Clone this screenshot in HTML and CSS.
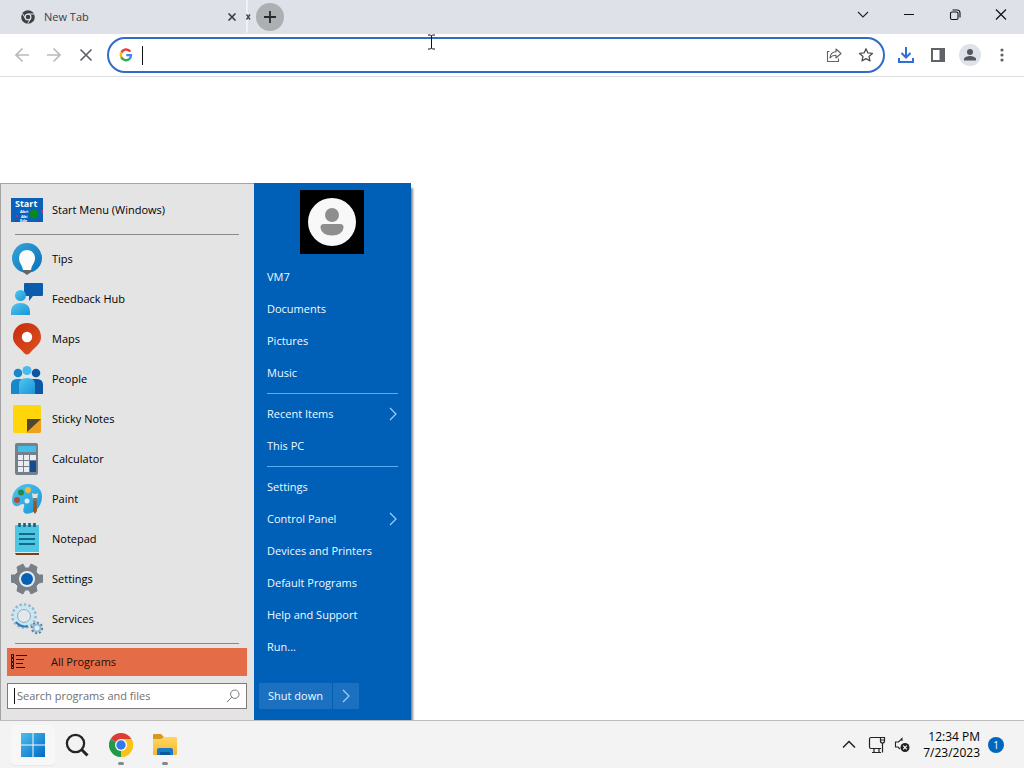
FILE: index.html
```html
<!DOCTYPE html>
<html lang="en">
<head>
<meta charset="utf-8">
<meta name="viewport" content="width=device-width, initial-scale=1">
<title>New Tab</title>
<link rel="stylesheet" href="styles.css">
</head>
<body>
<div class="desktop">
  <header class="browser">
    <div class="tabstrip">
      <div class="tab">
        <svg class="tab-icon" viewBox="0 0 14 14" width="14" height="14"><circle cx="7" cy="7" r="6.8" fill="#3c4043"/><circle cx="7" cy="7" r="2.9" fill="#3c4043" stroke="#e3e5ea" stroke-width="1.2"/><path d="M7 4h6M4.400 8.500 1.500 3.500M9.600 8.500 6.800 13.500" stroke="#e3e5ea" stroke-width="1"/></svg>
        <span class="tab-title">New Tab</span>
        <button class="plain tab-close" aria-label="Close tab"><svg viewBox="0 0 8 8" width="8" height="8"><path d="m.5.5 7 7m0-7-7 7" stroke="#333" stroke-width="1.5"/></svg></button>
      </div>
      <button class="plain tab-sliver" aria-label="Close second tab"><svg viewBox="0 0 5 6" width="5" height="6"><path d="m.5.5 3.500 5m0-5-3.500 5" stroke="#444" stroke-width="1.4"/></svg></button>
      <button class="plain new-tab" aria-label="New tab"><svg viewBox="0 0 12 12" width="12" height="12"><path d="M6 0v12M0 6h12" stroke="#292a2d" stroke-width="1.8"/></svg></button>
      <div class="window-controls">
        <button class="plain" aria-label="Search tabs"><svg viewBox="0 0 12 12" width="12" height="12"><path d="m1 3 5 5 5-5" fill="none" stroke="#222" stroke-width="1.1"/></svg></button>
        <button class="plain" aria-label="Minimize"><svg viewBox="0 0 12 12" width="12" height="12"><path d="M1 5.500h10" stroke="#111"/></svg></button>
        <button class="plain" aria-label="Restore"><svg viewBox="0 0 12 12" width="12" height="12" fill="none" stroke="#111" stroke-width="1.1"><rect x="1.500" y="3" width="7.500" height="7.500" rx="1.500"/><path d="M3.500 1h4.500q3 0 3 3v4.500"/></svg></button>
        <button class="plain" aria-label="Close"><svg viewBox="0 0 12 12" width="12" height="12"><path d="m1 .5 10 10m0-10-10 10" stroke="#111" stroke-width="1.200"/></svg></button>
      </div>
    </div>
    <div class="toolbar">
      <div class="nav">
        <button class="plain" aria-label="Back"><svg viewBox="0 0 16 16" width="16" height="16"><path d="M15 8H2m6.500-6.500L2 8l6.500 6.500" fill="none" stroke="#bababa" stroke-width="1.7"/></svg></button>
        <button class="plain" aria-label="Forward"><svg viewBox="0 0 16 16" width="16" height="16"><path d="M1 8h13M7.500 1.500 14 8l-6.500 6.500" fill="none" stroke="#bababa" stroke-width="1.700"/></svg></button>
        <button class="plain" aria-label="Stop"><svg viewBox="0 0 16 16" width="16" height="16"><path d="m2.500 2.500 11 11m0-11-11 11" stroke="#5f6368" stroke-width="1.700"/></svg></button>
      </div>
      <div class="omnibox">
        <svg viewBox="0 0 14 14" width="14" height="14" fill="none" stroke-width="2.4"><path d="M11.300 3.700A5 5 0 0 0 2.500 4.600" stroke="#ea4335"/><path d="M2.500 4.500a5 5 0 0 0 0 5" stroke="#fbbc05"/><path d="M2.400 9.300a5 5 0 0 0 8 1.600" stroke="#34a853"/><path d="M10.300 11A5 5 0 0 0 12 7.100H7.300" stroke="#4285f4"/></svg>
        <span class="caret caret-tall"></span>
        <input class="address" type="text" aria-label="Address and search bar">
        <button class="plain" aria-label="Share"><svg viewBox="0 0 16 16" width="16" height="16" fill="none" stroke="#5f6368" stroke-width="1.100"><path d="M3.500 4.500h-2v10h11v-3"/><path d="M4 11C4.300 7 6.500 4.800 10 4.700V2l5 4.500-5 4.500V8.300C7.300 8.300 5.500 9 4 11Z" stroke-linejoin="round"/></svg></button>
        <button class="plain" aria-label="Bookmark this tab"><svg viewBox="0 0 16 16" width="16" height="16"><path d="m8 1.800 1.900 4.100 4.500.5-3.400 3 1 4.500L8 11.600l-4 2.300 1-4.500-3.400-3 4.500-.5Z" fill="none" stroke="#4c5055" stroke-width="1.300" stroke-linejoin="round"/></svg></button>
      </div>
      <div class="tools">
        <button class="plain" aria-label="Downloads"><svg viewBox="0 0 18 18" width="18" height="18" fill="none" stroke="#2f6fd6" stroke-width="2"><path d="M9 1v10M4.500 7 9 11.500 13.500 7M2 12v4h14v-4"/></svg></button>
        <button class="plain" aria-label="Side panel"><svg viewBox="0 0 16 16" width="16" height="16"><rect x="2" y="2" width="12" height="12" fill="none" stroke="#5f6368" stroke-width="2"/><path d="M9.500 1H15v14H9.500z" fill="#5f6368"/></svg></button>
        <button class="plain profile" aria-label="Profile"><svg viewBox="0 0 14 14" width="14" height="14" fill="#54585e"><circle cx="7" cy="4" r="3"/><path d="M1 12.500V11c0-2 4-3 6-3s6 1 6 3v1.500Z"/></svg></button>
        <button class="plain" aria-label="Browser menu"><svg viewBox="0 0 16 16" width="16" height="16" fill="#5f6368"><circle cx="8" cy="3" r="1.600"/><circle cx="8" cy="8" r="1.600"/><circle cx="8" cy="13" r="1.600"/></svg></button>
      </div>
    </div>
    <svg class="pointer" viewBox="0 0 9 16" width="9" height="16"><path d="M1 1h2.500l1 1 1-1H8M4.500 2v12M1 15h2.500l1-1 1 1H8" fill="none" stroke="#111"/></svg>
  </header>

  <main class="page">
    <section class="start-menu" aria-label="Start menu">
      <div class="programs">
        <button class="plain program">
          <svg viewBox="0 0 32 32" width="32" height="32"><path d="M0 4h32v24H0z" fill="#0862bd"/><text x="4" y="13" class="logo-title">Start</text><text x="9" y="19" class="logo-line">Abri</text><text x="10" y="24" class="logo-line">Abi</text><text x="9" y="28" class="logo-line">Ede</text><circle cx="23" cy="20" r="4.500" fill="#078a1d"/><path d="M30 16h2v3h-2zM5 21h2v2H5z" fill="#a13b6e"/><path d="M4 26h3v2H4zm22 0h2v2h-2z" fill="#3e3fa5"/></svg>
          <span>Start Menu (Windows)</span></button>
        <hr class="rule">
        <button class="plain program">
          <svg viewBox="0 0 32 32" width="32" height="32"><defs><linearGradient id="tip" x2="1" y2="1"><stop stop-color="#35a5dc"/><stop offset="1" stop-color="#0870b5"/></linearGradient></defs><circle cx="16" cy="15" r="15" fill="url(#tip)"/><path d="M16 7c5 0 8 4 8 8 0 5-3 6-4 12h-8C11 21 8 20 8 15c0-4 3-8 8-8Z" fill="#fbfbfb"/><path d="M12 27h8v2l-4 3-4-3z" fill="#666"/></svg>
          <span>Tips</span></button>
        <button class="plain program">
          <svg viewBox="0 0 32 32" width="32" height="32"><defs><linearGradient id="sky" x2="1" y2="1"><stop stop-color="#53c5f0"/><stop offset="1" stop-color="#1896d8"/></linearGradient></defs><path d="M13 1q0-1 1-1h17q1 0 1 1v11q0 1-1 1h-9l-4 5v-5h-4q-1 0-1-1Z" fill="#0a5cad"/><circle cx="9.500" cy="12.500" r="5.500" fill="url(#sky)"/><path d="M0 32v-3c0-6 4-9 9.500-9S19 23 19 29v3Z" fill="url(#sky)"/></svg>
          <span>Feedback Hub</span></button>
        <button class="plain program">
          <svg viewBox="0 0 32 32" width="32" height="32"><defs><linearGradient id="pin" x2="1" y2="1"><stop stop-color="#c52c0b"/><stop offset="1" stop-color="#df5322"/></linearGradient></defs><path d="M16 0c8 0 14 6 14 14 0 7-5 9-11 16q-3 3-6 0C7 23 2 21 2 14 2 6 8 0 16 0Z" fill="url(#pin)"/><circle cx="16" cy="14" r="5.200" fill="#fff"/></svg>
          <span>Maps</span></button>
        <button class="plain program">
          <svg viewBox="0 0 32 32" width="32" height="32"><circle cx="7" cy="10" r="4.300" fill="#1687ca"/><circle cx="25" cy="10" r="4.300" fill="#0a56a5"/><path d="M0 31v-9q0-6 6-6h7v15Z" fill="#1788cc"/><path d="M19 16h7q6 0 6 6v9H19Z" fill="#0b58a7"/><circle cx="16" cy="7.500" r="4.500" fill="#48baf0"/><path d="M8 31V21q0-6 8-6t8 6v10Z" fill="url(#sky)"/></svg>
          <span>People</span></button>
        <button class="plain program">
          <svg viewBox="0 0 32 32" width="32" height="32"><path d="M4 2h24q2 0 2 2v24q0 2-2 2H4q-2 0-2-2V4q0-2 2-2Z" fill="#ffd60a"/><path d="M16 16h14v12q0 2-2 2H16Z" fill="#eda21b"/><path d="M16 16h14L16 29Z" fill="#51452f"/></svg>
          <span>Sticky Notes</span></button>
        <button class="plain program">
          <svg viewBox="0 0 32 32" width="32" height="32"><rect x="4" width="23" height="32" rx="2" fill="#75808a"/><path d="M7 3h18v6H7z" fill="#42bee8"/><path d="M7 12h5v5H7zm6 0h5v5h-5zm6 0h6v5h-6zM7 18h5v5H7zm6 0h5v5h-5zM7 24h5v5H7zm6 0h5v5h-5z" fill="#e9edf0"/><path d="M19 18h6v11h-6z" fill="#164c92"/></svg>
          <span>Calculator</span></button>
        <button class="plain program">
          <svg viewBox="0 0 32 32" width="32" height="32"><path d="M17 1c8 0 14 5 14 12 0 9-5 15-11 17-7 2-9-1-7-6 1-3-1-4-4-2-4 3-8 0-8-5C1 8 8 1 17 1Z" fill="url(#sky)"/><circle cx="17" cy="7" r="3" fill="#f1bb38"/><circle cx="10" cy="9.500" r="3" fill="#218a4b"/><circle cx="6" cy="17" r="3" fill="#b54b35"/><circle cx="16" cy="18" r="2.500" fill="#d9edf4"/><path d="M21 10q3 2 6 0l-1 7h-4Z" fill="#f2ddca"/><path d="M22 15h4v3h-4z" fill="#777"/><path d="M22.500 18h3l.5 10-2 3-2-3Z" fill="#945723"/></svg>
          <span>Paint</span></button>
        <button class="plain program">
          <svg viewBox="0 0 32 32" width="32" height="32"><rect x="4" y="2" width="24" height="28" rx="1" fill="#4dc6e4"/><path d="M4 30h24v2H5z" fill="#76401b"/><path d="M4 29h24v1H4z" fill="#d8f1f3"/><path d="M8 11h16M8 16h16M8 21h16" stroke="#146b89" stroke-width="1.800"/><path d="M8.500 0v4m5-4v4m5-4v4m5-4v4" stroke="#14657c" stroke-width="2.600"/></svg>
          <span>Notepad</span></button>
        <button class="plain program">
          <svg viewBox="0 0 32 32" width="32" height="32"><path d="m12 1 2 4h4l2-4 6 3-1 5 3 3h4v7l-4 1-3 3 1 5-6 3-2-4h-4l-2 4-6-3 1-5-3-3-4-1v-7h4l3-3-1-5Z" fill="#788087" stroke="#788087" stroke-linejoin="round"/><circle cx="16" cy="16" r="8" fill="#e6edf2"/><circle cx="16" cy="16" r="6" fill="#0860b5"/></svg>
          <span>Settings</span></button>
        <button class="plain program">
          <svg viewBox="0 0 32 32" width="32" height="32"><circle cx="13" cy="13" r="11.300" fill="none" stroke="#8fb7cf" stroke-width="3" stroke-dasharray="2.400 2"/><circle cx="13" cy="13" r="8.800" fill="none" stroke="#c6e7f3" stroke-width="3.500"/><circle cx="13" cy="13" r="6.500" fill="#e5e7e9" stroke="#789bb5" stroke-width=".8"/><path d="M5 19q5 6 12 4" fill="none" stroke="#2d82bd" stroke-width="2"/><circle cx="26" cy="25" r="5" fill="none" stroke="#557f9c" stroke-width="2.500" stroke-dasharray="2 1.800"/><circle cx="26" cy="25" r="3.500" fill="#e7eef2" stroke="#8dbdd4" stroke-width="2"/></svg>
          <span>Services</span></button>
        <hr class="rule">
        <button class="plain all-programs">
          <svg viewBox="0 0 16 16" width="16" height="16" fill="none" stroke="#1d0f0b"><path d="M.5.500h2v3h-2zM.5 4.500h2v3h-2zM.5 8.500h2v3h-2zM.5 12.500h2v2h-2zM5 1.500h11M5 5.500h8M5 9.500h7M5 13.500h9"/></svg>
          <span>All Programs</span></button>
        <label class="search">
          <span class="caret"></span>
          <input type="search" placeholder="Search programs and files" aria-label="Search programs and files">
          <svg viewBox="0 0 14 14" width="14" height="14" fill="none" stroke="#777"><circle cx="8.800" cy="5.200" r="4.200"/><path d="M5.800 8.200 1 13"/></svg>
        </label>
      </div>
      <nav class="places" aria-label="Places">
        <svg class="avatar" viewBox="0 0 64 64" width="64" height="64"><path d="M0 0h64v64H0z" fill="#000"/><circle cx="32" cy="32" r="24" fill="#f8f8f8"/><circle cx="32" cy="25" r="7" fill="#8e8e8e"/><path d="M24 34h16q3.500 0 3.500 3c0 5-5 8.500-11.500 8.500S20.500 42 20.500 37q0-3 3.500-3Z" fill="#8e8e8e"/></svg>
        <a class="place" href="#">VM7</a>
        <a class="place" href="#">Documents</a>
        <a class="place" href="#">Pictures</a>
        <a class="place" href="#">Music</a>
        <hr class="rule">
        <a class="place" href="#">Recent Items <svg viewBox="0 0 8 14" width="8" height="14"><path d="m1 1 6 6-6 6" fill="none" stroke="#9fd0ff" stroke-width="1.200"/></svg></a>
        <a class="place" href="#">This PC</a>
        <hr class="rule">
        <a class="place" href="#">Settings</a>
        <a class="place" href="#">Control Panel <svg viewBox="0 0 8 14" width="8" height="14"><path d="m1 1 6 6-6 6" fill="none" stroke="#9fd0ff" stroke-width="1.200"/></svg></a>
        <a class="place" href="#">Devices and Printers</a>
        <a class="place" href="#">Default Programs</a>
        <a class="place" href="#">Help and Support</a>
        <a class="place" href="#">Run...</a>
        <div class="power">
          <button class="plain shutdown">Shut down</button>
          <button class="plain power-more" aria-label="More power options"><svg viewBox="0 0 8 14" width="8" height="14"><path d="m1 1 6 6-6 6" fill="none" stroke="#9fd0ff" stroke-width="1.200"/></svg></button>
        </div>
      </nav>
    </section>
  </main>

  <footer class="taskbar">
    <div class="apps">
      <button class="plain app app-active" aria-label="Start"><svg viewBox="0 0 24 24" width="24" height="24"><defs><linearGradient id="pane" x1="0" y1="0" x2="24" y2="24" gradientUnits="userSpaceOnUse"><stop stop-color="#4cc0ef"/><stop offset="1" stop-color="#0069c4"/></linearGradient></defs><path d="M0 0h11.500v11.500H0zm12.500 0H24v11.500H12.500zM0 12.500h11.500V24H0zm12.500 0H24V24H12.500z" fill="url(#pane)"/></svg></button>
      <button class="plain app" aria-label="Search"><svg viewBox="0 0 24 24" width="24" height="24" fill="none" stroke="#252525"><circle cx="10.500" cy="10.500" r="8.600" stroke-width="2.300"/><path d="m16.500 16.500 6 6" stroke-width="3"/></svg></button>
      <button class="plain app app-running" aria-label="Chrome"><svg viewBox="0 0 24 24" width="24" height="24"><path d="M12 12 1.600 6A12 12 0 0 1 22.400 6Z" fill="#dc3c32"/><path d="M12 12 22.400 6A12 12 0 0 1 12 24Z" fill="#fbc116"/><path d="M12 12v12A12 12 0 0 1 1.600 6Z" fill="#249a48"/><path d="M12 6h10.400A12 12 0 0 1 12 24l5.200-9Z" fill="#fbc116"/><circle cx="12" cy="12" r="6" fill="#fff"/><circle cx="12" cy="12" r="4.700" fill="#3478e5"/></svg></button>
      <button class="plain app app-running" aria-label="File Explorer"><svg viewBox="0 0 24 24" width="24" height="24"><defs><linearGradient id="folder" x2="0" y2="1"><stop stop-color="#ffd75e"/><stop offset="1" stop-color="#f5b72f"/></linearGradient></defs><path d="M0 2q0-1 1-1h7l3 3-2 3H0Z" fill="#d39b1d"/><path d="M0 6h8l3-2h12q1 0 1 1v16q0 1-1 1H0Z" fill="url(#folder)"/><path d="M4 22v-5q0-2 2-2h12q2 0 2 2v5Z" fill="#197ac5"/><path d="M7 19h10v3H7z" fill="#0b589e"/></svg></button>
    </div>
    <div class="tray">
      <button class="plain" aria-label="Show hidden icons"><svg viewBox="0 0 14 14" width="14" height="14"><path d="m1 9.500 6-6 6 6" fill="none" stroke="#222" stroke-width="1.500"/></svg></button>
      <button class="plain" aria-label="Network"><svg viewBox="0 0 18 18" width="18" height="18" fill="none" stroke="#222" stroke-width="1.200"><path d="M12 1.500H3q-1.500 0-1.500 1.500v8q0 1.500 1.500 1.500h10M4 16.500h9M6 13v3.500m5-3.500v3.500M14.500 7v9.500M12.500 1.500h4V5q0 2-2 2t-2-2zM13 4h3"/></svg></button>
      <button class="plain" aria-label="Volume muted"><svg viewBox="0 0 16 16" width="16" height="16"><path d="M8 4V1.500L4.500 5h-3v5H4l2 2" fill="none" stroke="#222" stroke-width="1.100"/><circle cx="11" cy="10.500" r="4.500" fill="#222"/><path d="m9.200 8.700 3.600 3.600m0-3.600-3.600 3.600" stroke="#fff" stroke-width="1.200"/></svg></button>
      <time class="clock" datetime="2023-07-23T12:34"><span>12:34 PM</span><span>7/23/2023</span></time>
      <button class="plain notices" aria-label="1 notification">1</button>
    </div>
  </footer>
</div>
</body>
</html>
```

FILE: styles.css
```css
* { box-sizing: border-box; }

body {
  margin: 0;
  font: 11px/16px "Open Sans", "Noto Sans", sans-serif;
  color: #000;
  background: #fff;
}

svg { display: block; flex: none; }

.plain {
  display: flex;
  align-items: center;
  justify-content: center;
  margin: 0;
  padding: 0;
  border: 0;
  background: none;
  color: inherit;
  font: inherit;
}

input {
  flex: 1;
  min-width: 0;
  padding: 0;
  border: 0;
  outline: 0;
  background: none;
  font: inherit;
}

.desktop { display: flex; flex-direction: column; min-height: 100vh; }

/* Browser chrome */
.browser { position: relative; border-bottom: 1px solid #dcdde0; }
.tabstrip { display: flex; align-items: center; height: 34px; background: #dee1e8; }
.tab {
  display: flex;
  align-items: center;
  gap: 9px;
  width: 248px;
  height: 34px;
  padding: 0 10px 0 21px;
  border-right: 2px solid #f0f1f4;
  border-bottom-right-radius: 4px;
}
.tab-title { flex: 1; color: #3c4043; }
.tab-sliver { width: 5px; margin-left: -2px; }
.new-tab { width: 28px; height: 28px; margin-left: 5px; border-radius: 50%; background: #adb0b3; }
.window-controls { display: flex; margin-left: auto; padding-bottom: 5px; }
.window-controls .plain { width: 46px; height: 29px; }

.toolbar { display: flex; align-items: center; height: 42px; padding: 0 6px; }
.nav, .tools { display: flex; align-items: center; }
.nav .plain, .tools .plain { width: 32px; height: 32px; }
.omnibox {
  display: flex;
  align-items: center;
  flex: 1;
  height: 36px;
  margin: 0 5px;
  padding: 0 9px 0 10px;
  border: 2px solid #316cc4;
  border-radius: 18px;
}
.omnibox .plain { width: 16px; margin-left: 16px; }
.caret { width: 1px; height: 16px; background: #111; }
.caret-tall { height: 19px; margin-left: 9px; }
.tools .profile { width: 22px; height: 22px; margin: 0 5px; border-radius: 50%; background: #dfe2e8; }
.pointer { position: absolute; left: 427px; top: 34px; }

/* Page and start menu */
.page { position: relative; flex: 1; min-height: 540px; }
.start-menu {
  position: absolute;
  left: 0;
  bottom: 0;
  display: flex;
  box-shadow: 2px 5px 2px #888;
}
.programs {
  display: flex;
  flex-direction: column;
  width: 254px;
  padding: 6px 7px 11px 6px;
  border: solid #a3a3a3;
  border-width: 1px 0 0 1px;
  background: #e4e4e4;
}
.rule { width: auto; height: 1px; margin: 4px 8px; border: 0; background: #8b8b8b; }
.program { justify-content: flex-start; gap: 9px; height: 40px; padding: 0 4px; }
.logo-title { font: 700 9px "Open Sans", sans-serif; fill: #fff; }
.logo-line { font: 700 4px "Open Sans", sans-serif; fill: #fff; }
.all-programs { justify-content: flex-start; gap: 24px; height: 28px; padding: 0 4px; background: #e46c47; color: #1d0f0b; }
.search {
  display: flex;
  align-items: center;
  gap: 2px;
  height: 26px;
  margin-top: 7px;
  padding: 0 6px;
  border: 1px solid #817a76;
  background: #fff;
}
.search input::placeholder { color: #707070; opacity: 1; }

.places {
  display: flex;
  flex-direction: column;
  width: 157px;
  padding: 7px 6px 11px 5px;
  background: #005fb7;
  color: #f0faff;
}
.avatar { align-self: center; margin-bottom: 7px; }
.place {
  display: flex;
  align-items: center;
  justify-content: space-between;
  height: 32px;
  padding: 0 8px;
  color: inherit;
  text-decoration: none;
}
.places .rule { margin-right: 7px; background: #5cabf0; }
.power { display: flex; gap: 1px; height: 26px; margin-top: auto; }
.shutdown, .power-more { background: #1b70c0; }
.shutdown { width: 73px; }
.power-more { width: 26px; }

/* Taskbar */
.taskbar {
  position: relative;
  display: flex;
  align-items: center;
  justify-content: space-between;
  height: 48px;
  padding: 0 20px 0 11px;
  border-top: 1px solid #bcbcbc;
  background: #f3f3f3;
}
.apps { display: flex; }
.app { position: relative; width: 44px; height: 40px; }
.app-active { border-radius: 4px; background: #f7f7f7; box-shadow: 0 1px #e5e9ec; }
.app-running::after {
  content: "";
  position: absolute;
  bottom: 0;
  width: 6px;
  height: 3px;
  border-radius: 2px;
  background: #85888b;
}
.tray { display: flex; align-items: center; gap: 8px; }
.tray .plain:first-child { margin-right: 4px; }
.clock { display: flex; flex-direction: column; margin-left: 5px; font-size: 12px; text-align: right; }
.notices { width: 16px; height: 16px; border-radius: 50%; background: #0067bf; color: #fff; font-size: 10px; }
```
